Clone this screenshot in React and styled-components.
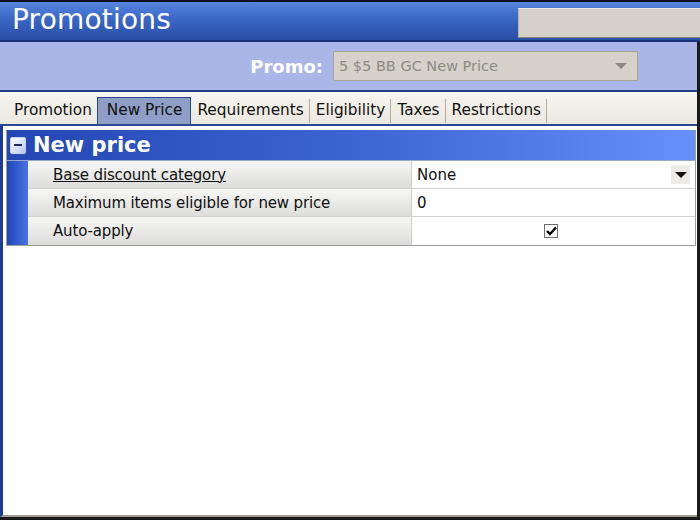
import React from 'react';
import styled, { createGlobalStyle } from 'styled-components';

const GlobalStyle = createGlobalStyle`
  html, body {
    margin: 0;
    padding: 0;
    background: #000;
  }
  body {
    font-family: 'DejaVu Sans', 'Liberation Sans', sans-serif;
  }
`;

const Window = styled.div`
  width: 700px;
  height: 520px;
  box-sizing: border-box;
  display: flex;
  flex-direction: column;
  background: #fff;
  border-top: 2px solid #111;
  border-bottom: 3px solid #1a1a1a;
  overflow: hidden;
`;

const TitleBar = styled.div`
  height: 38px;
  display: flex;
  align-items: center;
  justify-content: space-between;
  padding-left: 12px;
  background: linear-gradient(#5585e0 0%, #3a66c6 45%, #2a4fa6 100%);
  border-bottom: 2px solid #1b3478;
`;

const Title = styled.div`
  color: #fff;
  font-size: 28px;
  letter-spacing: 0.2px;
  line-height: 1;
  padding-bottom: 2px;
`;

const StatusBox = styled.div`
  width: 182px;
  height: 30px;
  align-self: flex-start;
  margin-top: 6px;
  box-sizing: border-box;
  background: #d5d1c8;
  border-top: 1px solid #eeeae0;
  border-left: 1px solid #b8b4a8;
  border-bottom: 1px solid #8a8678;
`;

const Body = styled.div`
  flex: 1;
  display: flex;
  flex-direction: column;
  border-right: 3px solid #1a1a1a;
`;

const PromoBar = styled.div`
  height: 48px;
  display: flex;
  align-items: center;
  justify-content: flex-end;
  gap: 10px;
  padding-right: 59px;
  background: #aab5e8;
  border-bottom: 2px solid #243f88;
`;

const PromoLabel = styled.div`
  color: #fff;
  font-weight: bold;
  font-size: 18px;
`;

const Select = styled.div`
  width: 305px;
  height: 30px;
  box-sizing: border-box;
  display: flex;
  align-items: center;
  justify-content: space-between;
  padding: 0 10px 0 5px;
  background: #d6d2ca;
  border: 1px solid #a8a498;
  color: #8c8a84;
  font-size: 14.5px;
`;

const Arrow = styled.span`
  width: 0;
  height: 0;
  border-left: 6px solid transparent;
  border-right: 6px solid transparent;
  border-top: 6px solid ${p => p.$color || '#8c8a84'};
`;

const TabStrip = styled.div`
  height: 32px;
  display: flex;
  align-items: flex-end;
  padding-left: 8px;
  background: linear-gradient(#f6f5f0, #ebe8e0);
  border-bottom: 2px solid #2b478f;
`;

const Tab = styled.div`
  height: ${p => (p.$active ? '27px' : '24px')};
  display: flex;
  align-items: center;
  box-sizing: border-box;
  padding: ${p => (p.$active ? '0 8px 2px 9px' : '0 5px 2px 6px')};
  font-size: 15.3px;
  color: #111;
  background: ${p => (p.$active ? '#8e9ec6' : 'transparent')};
  border: ${p => (p.$active ? '1px solid #2b478f' : 'none')};
  border-bottom: none;
  border-right: ${p => (p.$active ? '1px solid #2b478f' : p.$sep ? '1px solid #b8ae94' : 'none')};
  margin-bottom: ${p => (p.$active ? '0' : '1px')};
`;

const Panel = styled.div`
  flex: 1;
  display: flex;
  flex-direction: column;
  background: #fff;
  border-left: 3px solid #1e3a96;
  padding: 4px 1px 0 3px;
  border-bottom: 2px solid #a09c94;
`;

const Grid = styled.div`
  border: 1px solid #9c9c9c;
  border-top: none;
  background: #fff;
`;

const GroupHeader = styled.div`
  height: 30px;
  display: flex;
  align-items: center;
  gap: 7px;
  padding-left: 3px;
  background: linear-gradient(90deg, #2347b4 0%, #3c64d2 50%, #6690fb 100%);
  border-bottom: 1px solid #9aa8c8;
`;

const Toggle = styled.div`
  width: 16px;
  height: 17px;
  box-sizing: border-box;
  border-radius: 2px;
  border: 1px solid #c8d4f0;
  background: linear-gradient(135deg, #ffffff, #b8c8ee);
  display: flex;
  align-items: center;
  justify-content: center;

  &::after {
    content: '';
    width: 8px;
    height: 2px;
    background: #1e2c60;
  }
`;

const GroupTitle = styled.div`
  color: #fff;
  font-weight: bold;
  font-size: 21px;
  line-height: 1;
`;

const Row = styled.div`
  height: 28px;
  display: flex;
`;

const Gutter = styled.div`
  width: 21px;
  background: linear-gradient(90deg, #1f45b8, #4a74e4);
`;

const Label = styled.div`
  width: 384px;
  display: flex;
  align-items: center;
  padding-left: 25px;
  box-sizing: border-box;
  font-size: 15px;
  letter-spacing: -0.15px;
  color: #111;
  background: linear-gradient(#f7f7f5, #dcdcda);
  border-right: 1px solid #cfcfcf;
  border-bottom: ${p => (p.$last ? 'none' : '1px solid #d2d2d0')};
  text-decoration: ${p => (p.$link ? 'underline' : 'none')};
`;

const Value = styled.div`
  flex: 1;
  display: flex;
  align-items: center;
  justify-content: ${p => (p.$center ? 'center' : 'space-between')};
  padding: 0 5px;
  font-size: 15px;
  color: #111;
  border-bottom: ${p => (p.$last ? 'none' : '1px solid #d2d2d0')};
`;

const DropButton = styled.div`
  width: 19px;
  height: 19px;
  display: flex;
  align-items: center;
  justify-content: center;
  background: #ecebe6;
`;

const Check = styled.div`
  width: 14px;
  height: 14px;
  box-sizing: border-box;
  border: 1px solid #6e6e6e;
  background: #fff;
  display: flex;
  align-items: center;
  justify-content: center;
  margin-right: 5px;
`;

const tabs = [
  { name: 'Promotion' },
  { name: 'New Price', active: true },
  { name: 'Requirements', sep: true },
  { name: 'Eligibility', sep: true },
  { name: 'Taxes', sep: true },
  { name: 'Restrictions', sep: true },
];

const App = () => {
  return (
    <>
      <GlobalStyle />
      <Window>
        <TitleBar>
          <Title>Promotions</Title>
          <StatusBox />
        </TitleBar>
        <Body>
          <PromoBar>
            <PromoLabel>Promo:</PromoLabel>
            <Select>
              <span>5 $5 BB GC New Price</span>
              <Arrow />
            </Select>
          </PromoBar>
          <TabStrip>
            {tabs.map(t => (
              <Tab key={t.name} $active={t.active} $sep={t.sep}>
                {t.name}
              </Tab>
            ))}
          </TabStrip>
          <Panel>
            <Grid>
              <GroupHeader>
                <Toggle />
                <GroupTitle>New price</GroupTitle>
              </GroupHeader>
              <Row>
                <Gutter />
                <Label $link>Base discount category</Label>
                <Value>
                  <span>None</span>
                  <DropButton>
                    <Arrow $color="#111" />
                  </DropButton>
                </Value>
              </Row>
              <Row>
                <Gutter />
                <Label>Maximum items eligible for new price</Label>
                <Value>
                  <span>0</span>
                </Value>
              </Row>
              <Row>
                <Gutter />
                <Label $last>Auto-apply</Label>
                <Value $center $last>
                  <Check>
                    <svg width="11" height="10" viewBox="0 0 11 10">
                      <path d="M1 5 L4 8 L10 1.5" fill="none" stroke="#000" strokeWidth="2.4" />
                    </svg>
                  </Check>
                </Value>
              </Row>
            </Grid>
          </Panel>
        </Body>
      </Window>
    </>
  );
};

export default App;
